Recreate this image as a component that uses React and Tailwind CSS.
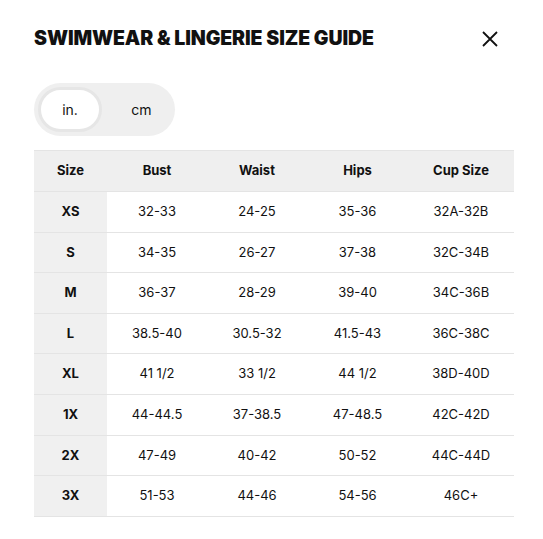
const rows = [
  ["XS", "32-33", "24-25", "35-36", "32A-32B"],
  ["S", "34-35", "26-27", "37-38", "32C-34B"],
  ["M", "36-37", "28-29", "39-40", "34C-36B"],
  ["L", "38.5-40", "30.5-32", "41.5-43", "36C-38C"],
  ["XL", "41 1/2", "33 1/2", "44 1/2", "38D-40D"],
  ["1X", "44-44.5", "37-38.5", "47-48.5", "42C-42D"],
  ["2X", "47-49", "40-42", "50-52", "44C-44D"],
  ["3X", "51-53", "44-46", "54-56", "46C+"],
];

export default function App() {
  return (
    <div
      className="w-[543px] h-[539px] bg-white text-[#111] px-[34px] pt-[27px]"
      style={{ fontFamily: "Inter, 'Liberation Sans', sans-serif" }}
    >
      <div className="flex items-center justify-between h-[24px]">
        <h1 className="text-[19.5px] font-black tracking-[-0.005em] leading-none">
          SWIMWEAR &amp; LINGERIE SIZE GUIDE
        </h1>
        <button className="mr-[10px] w-[18px] h-[18px] flex items-center justify-center">
          <svg width="16" height="16" viewBox="0 0 16 16" fill="none" stroke="#111" strokeWidth="1.8">
            <path d="M1 1L15 15M15 1L1 15" />
          </svg>
        </button>
      </div>

      <div className="mt-[32px] w-[141px] h-[53px] rounded-full bg-[#efefef] flex items-center p-[4px] text-[14px]">
        <div className="w-[64px] h-[45px] rounded-full bg-white border-[3px] border-[#e6e6e6] flex items-center justify-center">
          in.
        </div>
        <div className="flex-1 flex items-center justify-center pl-[10px]">cm</div>
      </div>

      <table className="mt-[14px] w-[480px] table-fixed border-collapse text-[13px] text-center">
        <thead>
          <tr className="bg-[#efefef] h-[41px] border-t border-b border-[#e4e4e4]">
            <th className="w-[73px] font-bold">Size</th>
            <th className="w-[100px] font-bold">Bust</th>
            <th className="w-[100px] font-bold">Waist</th>
            <th className="w-[101px] font-bold">Hips</th>
            <th className="w-[106px] font-bold">Cup Size</th>
          </tr>
        </thead>
        <tbody>
          {rows.map((r) => (
            <tr key={r[0]} className="h-[40.6px] border-b border-[#e4e4e4]">
              <td className="bg-[#f0f0f0] font-bold">{r[0]}</td>
              <td>{r[1]}</td>
              <td>{r[2]}</td>
              <td>{r[3]}</td>
              <td>{r[4]}</td>
            </tr>
          ))}
        </tbody>
      </table>
    </div>
  );
}
